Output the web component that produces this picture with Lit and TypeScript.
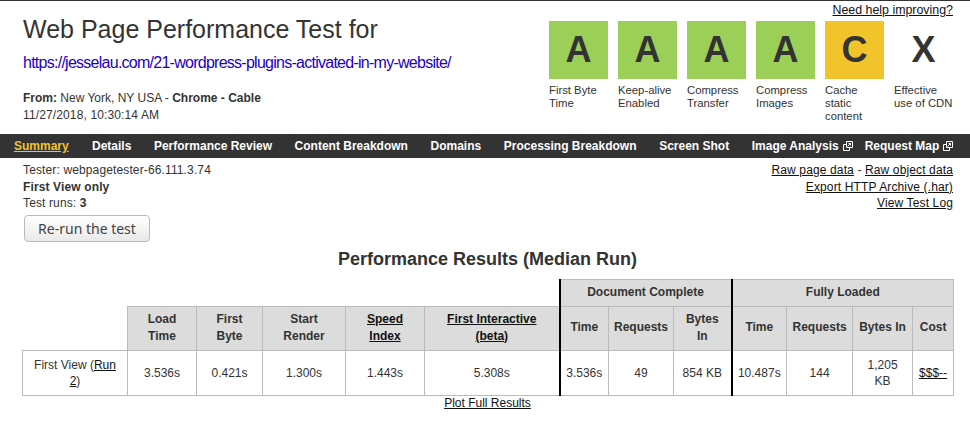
import { LitElement, html, css } from "lit";
import { customElement } from "lit/decorators.js";

const grades = [
  { g: "A", c: "a", t: "First Byte Time" },
  { g: "A", c: "a", t: "Keep-alive Enabled" },
  { g: "A", c: "a", t: "Compress Transfer" },
  { g: "A", c: "a", t: "Compress Images" },
  { g: "C", c: "c", t: "Cache static content" },
  { g: "X", c: "x", t: "Effective use of CDN" },
];
const nav = ["Summary", "Details", "Performance Review", "Content Breakdown", "Domains", "Processing Breakdown", "Screen Shot"];
const ext = html`<svg class="ext" viewBox="0 0 10 10" width="10" height="10" fill="none" stroke="#fff" stroke-width="1"><path d="M3.5.5h6v6h-6z"/><path d="M3.5 3.5h-3v6h6v-3"/><path d="M4.5 5.5l3-3M5.5 2.5h2v2"/></svg>`;

@customElement("app-root")
export class AppRoot extends LitElement {
  static styles = css`
    :host { display: block; width: 970px; height: 421px; overflow: hidden; background: #fff; color: #333; font: 12px/16px "Liberation Sans", Arial, sans-serif; border-top: 1px solid #333; box-sizing: border-box; }
    a { color: #111; text-decoration: underline; }
    .head { height: 133px; display: flex; justify-content: space-between; padding-left: 23px; box-sizing: border-box; }
    h1 { margin: 13px 0 0; font-size: 25px; line-height: 30px; font-weight: 400; color: #333; }
    .url { display: block; margin-top: 9px; font-size: 16px; line-height: 20px; letter-spacing: -0.74px; text-decoration: none; color: #2200c1; white-space: nowrap; }
    .from { margin-top: 17px; line-height: 16.5px; }
    .date { letter-spacing: 0.13px; }
    .right { width: 421px; }
    .help { display: block; text-align: right; margin: 1px 17px 0 0; font-size: 12.4px; line-height: 16px; }
    .grades { display: flex; gap: 10px; margin-top: 3px; }
    .grade { width: 59px; }
    .box { height: 58px; font-size: 36px; line-height: 58px; font-weight: 700; text-align: center; color: #333; }
    .box.a { background: #9ccf57; }
    .box.c { background: #f2c42c; }
    .lab { margin-top: 5px; font-size: 11.3px; line-height: 13px; width: 61px; }
    nav { height: 24px; background: #333; display: flex; align-items: center; padding-left: 14px; gap: 22.6px; font-weight: 700; color: #fff; white-space: nowrap; }
    nav a { color: #fff; text-decoration: none; display: flex; align-items: center; gap: 4px; }
    nav a.on { color: #f2c42c; text-decoration: underline; margin-right: 0.7px; }
    nav a.tight { margin-left: -10.6px; }
    .ext { display: block; margin-top: -1px; }
    .info { display: flex; justify-content: space-between; padding: 4px 17px 0 23px; line-height: 16.67px; height: 90px; box-sizing: border-box; letter-spacing: 0.13px; }
    .rlinks { text-align: right; }
    .rlinks a { color: #111; }
    button { display: block; margin: 3px 0 0 1px; width: 126px; height: 27px; box-sizing: border-box; border: 1px solid #bbb; border-radius: 4px; background: linear-gradient(#fff, #e9e9e9); color: #444; font: 14px "Noto Sans", sans-serif; padding: 0; letter-spacing: 0; }
    h2 { margin: 0; text-align: center; font-size: 18px; line-height: 22px; color: #333; padding-left: 5px; }
    .title { height: 31px; }
    .wrap { padding-left: 22px; }
    table { border-collapse: collapse; table-layout: fixed; width: 931px; font-size: 12px; }
    td, th { border: 1px solid #bbb; text-align: center; padding: 0 2px; line-height: 17px; }
    th { background: #dcdcdc; font-weight: 700; color: #333; padding-bottom: 2px; }
    th a { font-weight: 700; }
    .blank { border: 0; background: none; }
    .bar { border-left: 2px solid #000; }
    .r1 th { height: 24px; }
    .r2 th { height: 41px; }
    .r3 td { height: 44px; }
    td { line-height: 16.5px; }
    .plot { width: 931px; text-align: center; font-size: 12px; line-height: 14px; }
    .c1 { width: 105px; } .c2 { width: 69px; } .c3 { width: 66px; } .c4 { width: 83px; } .c5 { width: 79px; } .c6 { width: 135px; }
    .c7 { width: 49px; } .c8 { width: 65px; } .c9 { width: 58px; } .c10 { width: 55px; } .c11 { width: 66px; } .c12 { width: 60px; } .c13 { width: 41px; }
  `;
  render() {
    return html`
      <div class="head">
        <div>
          <h1>Web Page Performance Test for</h1>
          <a class="url" href="#">https://jesselau.com/21-wordpress-plugins-activated-in-my-website/</a>
          <div class="from"><b>From:</b> New York, NY USA - <b>Chrome - Cable</b><br /><span class="date">11/27/2018, 10:30:14 AM</span></div>
        </div>
        <div class="right">
          <a class="help" href="#">Need help improving?</a>
          <div class="grades">
            ${grades.map((g) => html`<div class="grade"><div class="box ${g.c}">${g.g}</div><div class="lab">${g.t}</div></div>`)}
          </div>
        </div>
      </div>
      <nav>
        ${nav.map((n, i) => html`<a href="#" class=${i === 0 ? "on" : ""}>${n}</a>`)}
        <a href="#">Image Analysis ${ext}</a>
        <a href="#" class="tight">Request Map ${ext}</a>
      </nav>
      <div class="info">
        <div>
          Tester: webpagetester-66.111.3.74<br /><b>First View only</b><br />Test runs: <b>3</b>
          <button>Re-run the test</button>
        </div>
        <div class="rlinks">
          <a href="#">Raw page data</a> - <a href="#">Raw object data</a><br />
          <a href="#">Export HTTP Archive (.har)</a><br />
          <a href="#">View Test Log</a>
        </div>
      </div>
      <div class="title"><h2>Performance Results (Median Run)</h2></div>
      <div class="wrap">
        <table>
          <colgroup>
            ${Array.from({ length: 13 }, (_, i) => html`<col class="c${i + 1}" />`)}
          </colgroup>
          <tr class="r1">
            <th class="blank" colspan="6"></th>
            <th class="bar" colspan="3">Document Complete</th>
            <th class="bar" colspan="4">Fully Loaded</th>
          </tr>
          <tr class="r2">
            <th class="blank"></th>
            <th>Load<br />Time</th>
            <th>First<br />Byte</th>
            <th>Start<br />Render</th>
            <th><a href="#">Speed<br />Index</a></th>
            <th><a href="#">First Interactive<br />(beta)</a></th>
            <th class="bar">Time</th>
            <th>Requests</th>
            <th>Bytes<br />In</th>
            <th class="bar">Time</th>
            <th>Requests</th>
            <th>Bytes In</th>
            <th>Cost</th>
          </tr>
          <tr class="r3">
            <td>First View (<a href="#">Run<br />2</a>)</td>
            <td>3.536s</td>
            <td>0.421s</td>
            <td>1.300s</td>
            <td>1.443s</td>
            <td>5.308s</td>
            <td class="bar">3.536s</td>
            <td>49</td>
            <td>854 KB</td>
            <td class="bar">10.487s</td>
            <td>144</td>
            <td>1,205<br />KB</td>
            <td><a href="#">$$$--</a></td>
          </tr>
        </table>
        <div class="plot"><a href="#">Plot Full Results</a></div>
      </div>
    `;
  }
}
